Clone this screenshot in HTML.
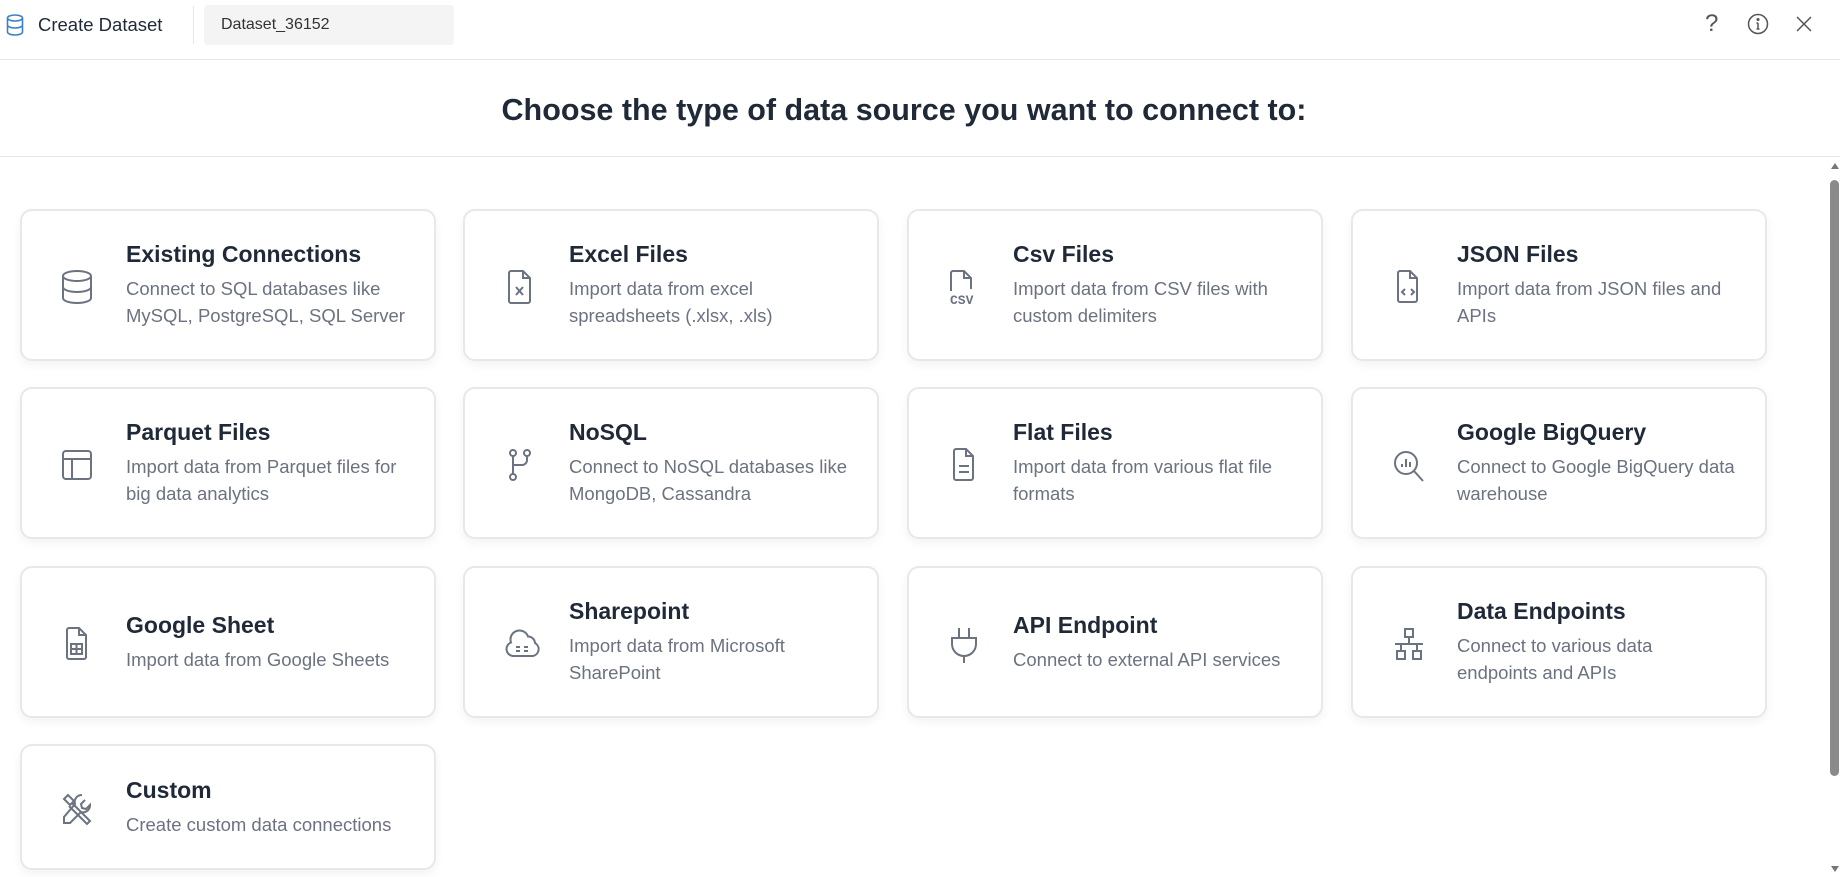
<!DOCTYPE html>
<html><head><meta charset="utf-8"><style>
*{box-sizing:border-box;margin:0;padding:0}
body{width:1840px;height:877px;overflow:hidden;background:#fff;font-family:"Liberation Sans",Arial,sans-serif;color:#1f2937;position:relative}
.hdr{position:absolute;left:0;top:0;width:1840px;height:60px;border-bottom:1px solid #e5e7eb}
.hdr .t{position:absolute;left:38px;top:14px;font-size:18.5px;color:#1f2937}
.hdr .div{position:absolute;left:193px;top:6px;width:1px;height:38px;background:#e5e7eb}
.hdr .inp{position:absolute;left:204px;top:5px;width:250px;height:40px;background:#f4f4f5;border-radius:4px;font-size:16px;padding:11px 17px;color:#333}
.h1{position:absolute;left:0;top:61px;width:1840px;height:96px;border-bottom:1px solid #e5e7eb;text-align:center;font-size:30.5px;font-weight:bold;line-height:98px;color:#1f2937;text-indent:-32px}
.card{position:absolute;width:416px;height:152px;border:2px solid #e8e8ea;border-radius:12px;background:#fff;box-shadow:0 4px 10px rgba(0,0,0,0.05);display:flex;align-items:center}
.card svg{position:absolute;left:38px;top:58px}
.txt{margin-left:104px;width:310px}
.txt b{display:block;font-size:23px;color:#1f2937;margin-bottom:7px}
.txt span{display:block;font-size:18.5px;line-height:27px;color:#6b7280}
.sb{position:absolute;left:1829px;top:160px;width:11px;height:717px}
.thumb{position:absolute;left:1830px;top:180px;width:9px;height:596px;background:#8a8a8a;border-radius:5px}
</style></head><body>
<div class="hdr">
<svg style="position:absolute;left:6px;top:14px" width="18" height="22" viewBox="0 0 18 22" fill="none" stroke="#3b82c4" stroke-width="1.6"><ellipse cx="9" cy="4" rx="7.5" ry="3"/><path d="M1.5 4v14c0 1.7 3.4 3 7.5 3s7.5-1.3 7.5-3V4M1.5 11c0 1.7 3.4 3 7.5 3s7.5-1.3 7.5-3"/></svg>
<div class="t">Create Dataset</div><div class="div"></div>
<div class="inp">Dataset_36152</div>
<div style="position:absolute;left:1705px;top:10px;font-size:24px;color:#555">?</div>
<svg style="position:absolute;left:1747px;top:13px" width="22" height="22" viewBox="0 0 22 22" fill="none" stroke="#555" stroke-width="1.5"><circle cx="11" cy="11" r="9.5"/><path d="M11 10v6M9.5 16h3M9.5 10h1.5"/><circle cx="11" cy="6.5" r=".8" fill="#555"/></svg>
<svg style="position:absolute;left:1795px;top:15px" width="18" height="18" viewBox="0 0 18 18" stroke="#555" stroke-width="1.5"><path d="M2 2l14 14M16 2L2 16"/></svg>
</div>
<div class="h1">Choose the type of data source you want to connect to:</div>

<div class="card" style="left:20px;top:209px"><svg width="34" height="36" viewBox="0 0 34 36" fill="none" stroke="#6b7280" stroke-width="2"><ellipse cx="17" cy="7" rx="14" ry="5"/><path d="M3 7v22c0 2.8 6.3 5 14 5s14-2.2 14-5V7M3 18c0 2.8 6.3 5 14 5s14-2.2 14-5"/></svg><div class="txt"><b>Existing Connections</b><span>Connect to SQL databases like<br>MySQL, PostgreSQL, SQL Server</span></div></div>
<div class="card" style="left:463px;top:209px"><svg width="34" height="36" viewBox="0 0 34 36" fill="none" stroke="#6b7280" stroke-width="2"><path d="M8 2h12l7 7v23a2 2 0 0 1-2 2H8a2 2 0 0 1-2-2V4a2 2 0 0 1 2-2zM20 2v7h7M13 18l7 8M20 18l-7 8"/></svg><div class="txt"><b>Excel Files</b><span>Import data from excel<br>spreadsheets (.xlsx, .xls)</span></div></div>
<div class="card" style="left:907px;top:209px"><svg width="40" height="38" viewBox="0 0 40 38" fill="none" stroke="#6b7280" stroke-width="2"><path d="M4 22V4a2 2 0 0 1 2-2h11l7 7v11M17 2v7h7"/><text x="3" y="35" font-size="13" font-family="Liberation Mono" fill="#6b7280" stroke="none" font-weight="bold">CSV</text></svg><div class="txt"><b>Csv Files</b><span>Import data from CSV files with<br>custom delimiters</span></div></div>
<div class="card" style="left:1351px;top:209px"><svg width="34" height="36" viewBox="0 0 34 36" fill="none" stroke="#6b7280" stroke-width="2"><path d="M9 2h10l7 7v22a2 2 0 0 1-2 2H9a2 2 0 0 1-2-2V4a2 2 0 0 1 2-2zM19 2v7h7M14 20l-3 3 3 3M20 20l3 3-3 3"/></svg><div class="txt"><b>JSON Files</b><span>Import data from JSON files and<br>APIs</span></div></div>

<div class="card" style="left:20px;top:387px"><svg width="34" height="36" viewBox="0 0 34 36" fill="none" stroke="#6b7280" stroke-width="2"><rect x="3" y="4" width="28" height="28" rx="3"/><path d="M3 12h28M12 12v20"/></svg><div class="txt"><b>Parquet Files</b><span>Import data from Parquet files for<br>big data analytics</span></div></div>
<div class="card" style="left:463px;top:387px"><svg width="34" height="36" viewBox="0 0 34 36" fill="none" stroke="#6b7280" stroke-width="2"><circle cx="10" cy="6" r="3"/><circle cx="24" cy="6" r="3"/><circle cx="10" cy="30" r="3"/><path d="M10 9v18M24 9v4a5 5 0 0 1-5 5h-9"/></svg><div class="txt"><b>NoSQL</b><span>Connect to NoSQL databases like<br>MongoDB, Cassandra</span></div></div>
<div class="card" style="left:907px;top:387px"><svg width="34" height="36" viewBox="0 0 34 36" fill="none" stroke="#6b7280" stroke-width="2"><path d="M9 2h10l7 7v22a2 2 0 0 1-2 2H9a2 2 0 0 1-2-2V4a2 2 0 0 1 2-2zM19 2v7h7M12 19h10M12 25h10"/></svg><div class="txt"><b>Flat Files</b><span>Import data from various flat file<br>formats</span></div></div>
<div class="card" style="left:1351px;top:387px"><svg width="36" height="38" viewBox="0 0 36 38" fill="none" stroke="#6b7280" stroke-width="2"><circle cx="15" cy="16" r="11"/><path d="M23 24l9 10M11 20v-3M15 20v-8M19 20v-5"/></svg><div class="txt"><b>Google BigQuery</b><span>Connect to Google BigQuery data<br>warehouse</span></div></div>

<div class="card" style="left:20px;top:566px"><svg width="34" height="36" viewBox="0 0 34 36" fill="none" stroke="#6b7280" stroke-width="2"><path d="M9 2h10l7 7v22a2 2 0 0 1-2 2H9a2 2 0 0 1-2-2V4a2 2 0 0 1 2-2zM19 2v7h7"/><rect x="11" y="18" width="11" height="10"/><path d="M11 23h11M16.5 18v10"/></svg><div class="txt"><b>Google Sheet</b><span>Import data from Google Sheets</span></div></div>
<div class="card" style="left:463px;top:566px"><svg width="40" height="36" viewBox="0 0 40 36" fill="none" stroke="#6b7280" stroke-width="2"><path d="M10 30a7 7 0 0 1-2-13.5 9 9 0 0 1 17-6A7 7 0 0 1 32 17a7 7 0 0 1-2 13z"/><path d="M13 21h4M21 21h4M13 25h4M21 25h4"/></svg><div class="txt"><b>Sharepoint</b><span>Import data from Microsoft<br>SharePoint</span></div></div>
<div class="card" style="left:907px;top:566px"><svg width="34" height="38" viewBox="0 0 34 38" fill="none" stroke="#6b7280" stroke-width="2"><path d="M12 2v10M22 2v10M5 12h24v6a12 12 0 0 1-24 0zM17 30v7"/></svg><div class="txt"><b>API Endpoint</b><span>Connect to external API services</span></div></div>
<div class="card" style="left:1351px;top:566px"><svg width="36" height="36" viewBox="0 0 36 36" fill="none" stroke="#6b7280" stroke-width="2"><rect x="14" y="3" width="8" height="8"/><rect x="6" y="25" width="8" height="8"/><rect x="22" y="25" width="8" height="8"/><path d="M18 11v7M4 18h28M10 18v7M26 18v7"/></svg><div class="txt"><b>Data Endpoints</b><span>Connect to various data<br>endpoints and APIs</span></div></div>

<div class="card" style="left:20px;top:744px;height:126px"><svg style="top:45px" width="36" height="38" viewBox="0 0 36 38" fill="none" stroke="#6b7280" stroke-width="2"><path d="M8 4l-4 4 6 6 4-4zM12 12l18 18-3 3L9 15M22 4a7 7 0 0 0-7 9L4 26v6h6l11-11a7 7 0 0 0 9-7l-4 4-4-1-1-4 4-4"/></svg><div class="txt"><b>Custom</b><span>Create custom data connections</span></div></div>

<div class="sb"><svg style="position:absolute;left:1px;top:2px" width="10" height="8"><path d="M5 1l4 6H1z" fill="#777"/></svg><svg style="position:absolute;left:1px;top:705px" width="10" height="8"><path d="M5 7l4-6H1z" fill="#777"/></svg></div>
<div class="thumb"></div>
</body></html>
